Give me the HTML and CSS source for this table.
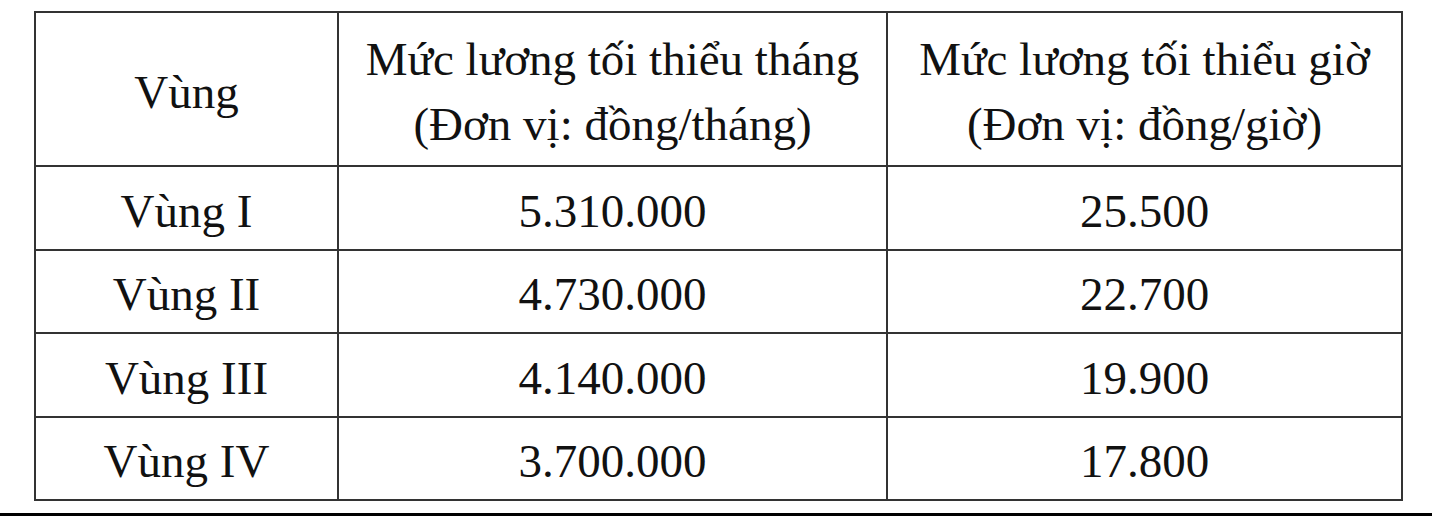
FILE: index.html
```html
<!DOCTYPE html>
<html lang="vi">
<head>
<meta charset="utf-8">
<link rel="stylesheet" href="styles.css">
</head>
<body>
<div class="page">
  <table class="wage">
    <colgroup>
      <col class="c1"><col class="c2"><col class="c3">
    </colgroup>
    <thead>
      <tr class="head">
        <th>Vùng</th>
        <th>Mức lương tối thiểu tháng<br>(Đơn vị: đồng/tháng)</th>
        <th>Mức lương tối thiểu giờ<br>(Đơn vị: đồng/giờ)</th>
      </tr>
    </thead>
    <tbody>
      <tr><td>Vùng I</td><td>5.310.000</td><td>25.500</td></tr>
      <tr><td>Vùng II</td><td>4.730.000</td><td>22.700</td></tr>
      <tr><td>Vùng III</td><td>4.140.000</td><td>19.900</td></tr>
      <tr><td>Vùng IV</td><td>3.700.000</td><td>17.800</td></tr>
    </tbody>
  </table>
  <div class="rule"></div>
</div>
</body>
</html>
```

FILE: styles.css
```css
html, body {
  margin: 0;
  padding: 0;
  background: #fff;
}
.page {
  width: 1432px;
  height: 516px;
  padding-top: 11px;
  box-sizing: border-box;
  display: flex;
  flex-direction: column;
}
.wage {
  margin-left: 34px;
  width: 1367px;
  border-collapse: collapse;
  table-layout: fixed;
  font-family: "Liberation Serif", "Times New Roman", serif;
  font-size: 47px;
  color: #111;
}
.c1 { width: 303px; }
.c2 { width: 549px; }
.c3 { width: 515px; }
.wage th,
.wage td {
  border: 2px solid #333;
  padding: 6px 0 0;
  text-align: center;
  vertical-align: middle;
  font-weight: normal;
}
.head th {
  height: 146px;
  line-height: 65px;
}
.wage td {
  height: 75.5px;
  line-height: 50px;
}
.rule {
  margin-top: auto;
  height: 3px;
  background: #000;
}
```
